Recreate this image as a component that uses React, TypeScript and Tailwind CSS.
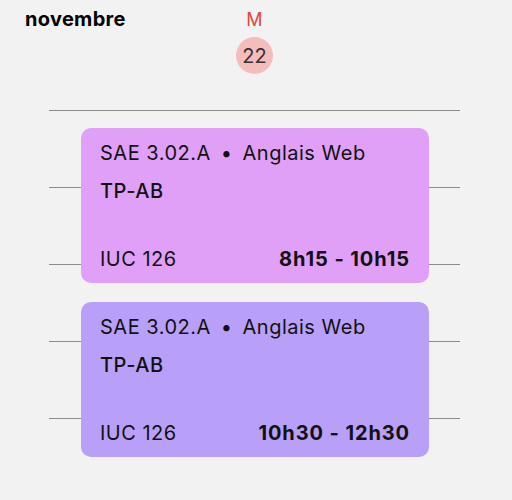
const HOUR_PX = 77;
const START_HOUR = 8;
const hours = [8, 9, 10, 11, 12];

const events = [
  {
    code: "SAE 3.02.A",
    title: "Anglais Web",
    group: "TP-AB",
    room: "IUC 126",
    start: 8.25,
    end: 10.25,
    label: "8h15 - 10h15",
    color: "bg-[#e0a0f8]",
  },
  {
    code: "SAE 3.02.A",
    title: "Anglais Web",
    group: "TP-AB",
    room: "IUC 126",
    start: 10.5,
    end: 12.5,
    label: "10h30 - 12h30",
    color: "bg-[#b8a0f8]",
  },
];

export default function App() {
  return (
    <div
      className="min-h-[500px] w-[512px] bg-[#f2f2f2] text-[#111]"
      style={{ fontFamily: "Inter, 'Noto Sans', sans-serif" }}
    >
      {/* Header */}
      <div className="grid grid-cols-[49px_411px] pt-[8px]">
        <div className="pl-[25px] whitespace-nowrap text-[20px] font-bold leading-[22px] tracking-[0.3px] text-black">
          novembre
        </div>
        <div className="flex flex-col items-center">
          <span className="text-[18px] leading-[24px] text-[#e0483c]">M</span>
          <span className="mt-[5px] flex h-[37px] w-[37px] items-center justify-center rounded-full bg-[#f5bcbc] text-[20px] text-[#333]">
            22
          </span>
        </div>
      </div>

      {/* Day grid */}
      <div className="relative ml-[49px] mt-[36px] w-[411px]">
        {hours.map((h) => (
          <div key={h} className="h-[77px] border-t border-[#8c8c8c]" />
        ))}

        {events.map((ev, i) => (
          <div
            key={i}
            className={`absolute left-[32px] right-[31px] flex flex-col justify-between rounded-[10px] px-[19px] pt-[13px] pb-[12px] ${ev.color}`}
            style={{
              top: (ev.start - START_HOUR) * HOUR_PX - 1,
              height: (ev.end - ev.start) * HOUR_PX + 1,
            }}
          >
            <div className="text-[20px] leading-[24px] tracking-[0.5px]">
              <div className="flex items-center">
                <span>{ev.code}</span>
                <span className="mx-[10px]">•</span>
                <span>{ev.title}</span>
              </div>
              <div className="mt-[14px] font-medium">{ev.group}</div>
            </div>
            <div className="flex items-center justify-between text-[20px] leading-[24px]">
              <span className="tracking-[0.5px]">{ev.room}</span>
              <span className="font-bold tracking-[0.9px]">{ev.label}</span>
            </div>
          </div>
        ))}
      </div>
    </div>
  );
}
